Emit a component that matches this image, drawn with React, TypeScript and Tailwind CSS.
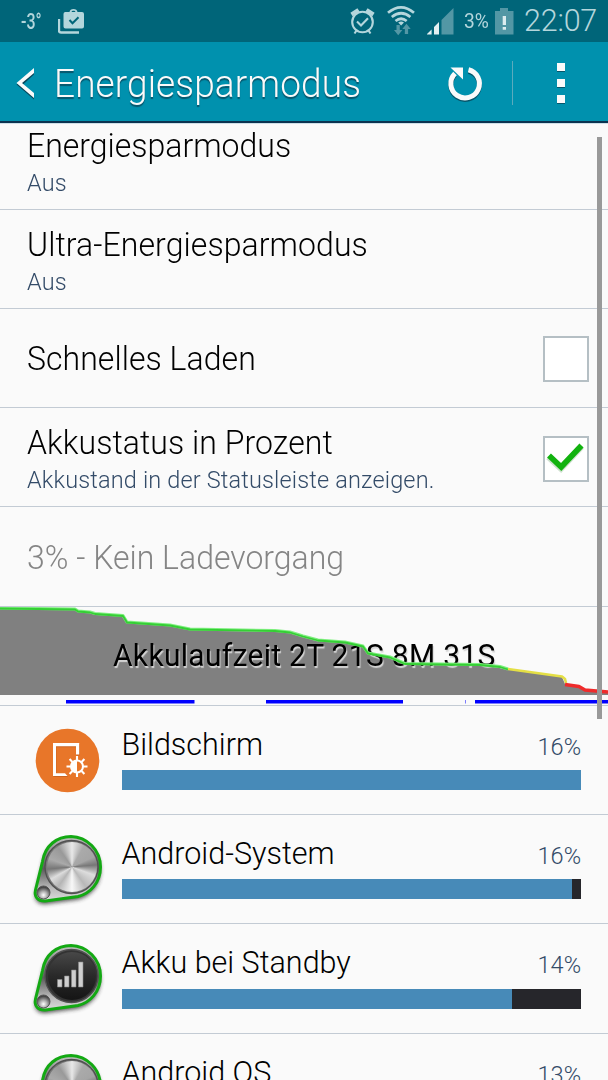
import React from "react";

const ICON = "#b4d6dc";
const DIM = "#5397a5";

function StatusBar() {
  return (
    <div className="flex h-[42px] items-center bg-[#006579] text-[#b4d6dc]">
      <span className="ml-[21px] w-[21px] text-[20px] leading-[42px] font-medium whitespace-nowrap">
        <span className="inline-block origin-left scale-x-[0.8] scale-y-[1.1]">-3°</span>
      </span>
      <svg className="ml-[16px]" width="28" height="26" viewBox="0 0 28 26">
        <path d="M1 11v11.5a2 2 0 0 0 2 2h18" fill="none" stroke={ICON} strokeWidth="2.4" />
        <path fillRule="evenodd" fill={ICON} d="M7 4h4.5c.3-2 1.800-3 4-3s3.700 1 4 3H24a2 2 0 0 1 2 2v12.500a2 2 0 0 1-2 2H7.500a2 2 0 0 1-2-2V6a2 2 0 0 1 1.500-2zM13.500 4h4c-.2-1-1-1.300-2-1.300s-1.800.3-2 1.300z" />
        <path d="M11.500 12l3 3.200 6-6" fill="none" stroke="#006579" strokeWidth="2" />
      </svg>
      <svg className="ml-auto" width="110" height="32" viewBox="348 5 110 32">
        <g fill="none" stroke={ICON} strokeWidth="2.100">
          <circle cx="362.500" cy="22" r="10.300" />
          <path d="M357 21.500l4 4 7-7.200M356.500 30.500l-2 3M368.500 30.500l2 3" />
          <path d="M351.500 14.500l7-4.600M373.500 14.500l-7-4.600" strokeWidth="4" />
        </g>
        <g fill="none" stroke={ICON} strokeWidth="2.700">
          <path d="M388 12.800q13-11 26 0" />
          <path d="M391.800 17q9.300-7.500 18.600 0" />
          <path d="M395.500 21q5.600-4.500 11.200 0" />
        </g>
        <path d="M398.200 22.500q2.900-2 5.800 0l-2.900 3z" fill={ICON} />
        <path d="M396.500 25h3.300v5h2.600l-4.200 5.300-4.200-5.300h2.500zM404.800 34h3.300v-5h2.600l-4.200-5.300-4.200 5.300h2.600z" fill={DIM} />
        <path d="M427 34.500v-.5l4.600-4.500v5zM434 34.500v-7.500l5-5v12.500z" fill="#e3f0f2" />
        <path d="M441.500 34.500V20L453.500 8v26.500z" fill={DIM} />
      </svg>
      <span className="ml-[6px] w-[26px] text-[20px] leading-[44px] whitespace-nowrap">
        <span className="inline-block origin-left scale-x-[0.96] scale-y-[1.04]">3%</span>
      </span>
      <svg className="ml-[5px]" width="19" height="28" viewBox="0 0 19 28">
        <path d="M0 4h5V1h8v3h5.500v23.500H0z" fill={DIM} />
        <path d="M7.700 9h3.300v9H7.700zM7.700 20h3.300v2.700H7.700z" fill="#dcecef" />
      </svg>
      <span className="mr-[10px] ml-[10px] w-[74px] text-[30.500px] leading-[42px] font-light tracking-[-0.200px] whitespace-nowrap">22:07</span>
    </div>
  );
}

function ActionBar() {
  return (
    <div className="flex h-[82px] items-start border-b border-[#cfe0e8] bg-[#0091ae]">
      <div className="flex h-[81px] w-full items-center border-b-2 border-[#0b3350] pt-[3px]">
        <svg className="ml-[15px]" width="22" height="36" viewBox="0 0 22 36">
          <path d="M19 4.500v5L8 19.500l11 10v5L1.500 19.500z" fill="#06485c" />
          <path d="M19 3v5L7 18l12 10v5L1.500 18z" fill="#fafafa" />
        </svg>
        <h1 className="mt-[3px] ml-[17px] w-[330px] origin-[0_32px] scale-y-[1.03] text-[37px] leading-[40px] font-light tracking-[0.100px] whitespace-nowrap text-[#fafafa] [text-shadow:0_2px_1px_#07556b]">Energiesparmodus</h1>
        <svg className="ml-[61.500px]" width="40" height="40" viewBox="0 0 40 40">
          <path d="M22.500 6.700A14.300 14.300 0 1 1 9 10.500" transform="translate(0 1.500)" fill="none" stroke="#06566b" strokeWidth="5" />
          <path d="M22.500 6.700A14.300 14.300 0 1 1 9 10.500" fill="none" stroke="#fafafa" strokeWidth="5" />
          <path d="M4.500 4.500h12.500v12z" fill="#fafafa" />
        </svg>
        <div className="ml-[26.500px] h-[44px] w-px bg-[#5cabbd]" />
        <div className="ml-[44px] flex flex-col gap-[8px]">
          <i className="block size-[8px] bg-[#fafafa] shadow-[0_1px_0_#06566b]" />
          <i className="block size-[8px] bg-[#fafafa] shadow-[0_1px_0_#06566b]" />
          <i className="block size-[8px] bg-[#fafafa] shadow-[0_1px_0_#06566b]" />
        </div>
      </div>
    </div>
  );
}

function Check({ on }: { on?: boolean }) {
  return (
    <div className={`mr-[19px] ml-auto flex size-[46px] items-center justify-center border-2 border-[#b5bfc4] bg-white ${on ? "mb-[2px]" : ""}`}>
      {on && (
        <svg width="42" height="42" viewBox="0 0 42 42">
          <path d="M4 18.500l13 12L38 8" fill="none" stroke="#0d6b0d" strokeOpacity=".2" strokeWidth="5" transform="translate(-1 1)" />
          <path d="M4 17.500l12.200 11.500L36.500 7.500" fill="none" stroke="#12b20f" strokeWidth="5.700" />
        </svg>
      )}
    </div>
  );
}

function Setting({ title, sub, check, className, titleClass, subClass = "mt-[2px]" }: { title: string; sub?: string; check?: "on" | "off"; className: string; titleClass: string; subClass?: string }) {
  return (
    <div className={`flex shrink-0 items-center border-b border-[#c3cbd4] pl-[27px] ${className}`}>
      <div className="whitespace-nowrap">
        <div className={`origin-[0_31px] scale-y-[1.04] text-[32px] leading-[40px] font-light ${titleClass}`}>{title}</div>
        {sub && <div className={`origin-[0_24px] scale-y-[1.03] text-[23.500px] leading-[32px] font-light tracking-[0.150px] text-[#334b68] ${subClass}`}>{sub}</div>}
      </div>
      {check && <Check on={check === "on"} />}
    </div>
  );
}

function Graph() {
  return (
    <div className="grid h-[99px] shrink-0 border-b border-[#c3cbd4]">
      <svg className="col-start-1 row-start-1" width="608" height="98" viewBox="0 607 608 98">
        <path d="M0 607L75 609 78 611 95 614 123 616 127 622 170 625 190 629 275 630.500 290 632 303 636 318 640 345 642 363 646 368 653 390 657 405 663 480 665 506 669 562 677 565 684 581 687 585 690 608 692V695H0Z" fill="#808080" />
      </svg>
      <div className="z-10 col-start-1 row-start-1 origin-[0_60px] scale-y-[1.02] pt-[29px] pl-[113px] text-[30px] leading-[40px] tracking-[0.300px] whitespace-nowrap text-black [text-shadow:1px_1.500px_1px_#d5d5d5]">Akkulaufzeit 2T 21S 8M 31S</div>
      <svg className="z-20 col-start-1 row-start-1" width="608" height="98" viewBox="0 607 608 98">
        <g fill="none" strokeLinejoin="round">
          <path d="M0 608L75 609 78 611 90 612 95 613.500 123 615.500 127 622 170 625 190 629 275 630.500 290 632 303 636 318 640 345 642 363 646 368 653 390 657 405 663.500 480 664.500 500 666.500 508 669" stroke="#80f080" strokeWidth="3" />
          <path d="M0 608.500L75 609.500 78 611.500 90 612.500 95 614 123 616 127 622.500 170 625.500 190 629.500 275 631 290 632.500 303 636.500 318 640.500 345 642.500 363 646.500 368 653.500 390 657.500 405 664 480 665 500 667 508 669.500" stroke="#35cf35" strokeWidth="1.800" />
          <path d="M508 669L562 676.500 565 679 566 683" stroke="#e4df45" strokeWidth="2.600" />
          <path d="M565 684.500L579 686.500 585 690 608 692" stroke="#ef2b2b" strokeWidth="3.400" />
        </g>
        <path d="M66 700h128.500v3.500H66zM266 700h137v3.500H266zM465 700h.5v3.500h-.5zM475 700h133v3.500H475z" fill="#0000ff" />
      </svg>
    </div>
  );
}

function ScreenIcon() {
  return (
    <svg width="80" height="84" viewBox="0 0 80 84">
      <circle cx="41.500" cy="40.500" r="31.800" fill="#e87629" />
      <path d="M41.500 56L39 53.200H30V26.200H50V34.500H53.200V23H27V56z" fill="#b95a1d" opacity=".6" transform="translate(.5 1)" />
      <path d="M41.500 56L39 53.200H30V26.200H50V34.500H53.200V23H27V56z" fill="#fff" />
      <g stroke="#fff" strokeWidth="2.100" fill="none">
        <circle cx="51" cy="46.500" r="6" />
        <path d="M51 36v4M51 53v4M40.500 46.500h4M57.500 46.500h4M43.600 39.100l2.800 2.800M55.600 51.100l2.800 2.800M43.600 53.900l2.800-2.800M55.600 41.900l2.800-2.800" />
      </g>
      <path d="M51 40.500a6 6 0 0 0 0 12z" fill="#fff" />
    </svg>
  );
}

function DialIcon({ signal }: { signal?: boolean }) {
  const shape = "M16.500 31.500C19 15.500 31 6.500 45 6.500C61 7 74.500 20 74.500 37C74.500 53 64 63.500 52 66.500L19.500 71C12 71.500 8 67 9.500 60Z";
  return (
    <div className="relative h-[84px] w-[84px]">
      <svg width="84" height="84" viewBox="0 0 84 84">
        <defs>
          <linearGradient id="rim" x1="0" y1="0" x2="0" y2="1">
            <stop offset="0" stopColor="#c2c2c2" />
            <stop offset=".25" stopColor="#8d8d8d" />
            <stop offset=".5" stopColor="#5b5b5b" />
            <stop offset=".8" stopColor="#bababa" />
            <stop offset="1" stopColor="#ddd" />
          </linearGradient>
          <radialGradient id="nub" cx=".5" cy=".7" r=".6">
            <stop offset="0" stopColor="#fff" />
            <stop offset=".5" stopColor="#aaa" />
            <stop offset="1" stopColor="#454545" />
          </radialGradient>
          <filter id="soft" x="-20%" y="-20%" width="140%" height="140%">
            <feGaussianBlur stdDeviation="2" />
          </filter>
        </defs>
        <path d={shape} transform="translate(0 3)" fill="#333" opacity=".85" filter="url(#soft)" />
        <path d={shape} fill="url(#rim)" stroke="#13a913" strokeWidth="3" />
        <circle cx="17.500" cy="62.500" r="6.500" fill="url(#nub)" stroke="#555" />
        <circle cx="45.500" cy="37" r="26.500" fill={signal ? "#333" : "#777"} stroke="#505050" strokeWidth="1.300" />
      </svg>
      <div className={signal
        ? "absolute top-[13px] left-[21.500px] size-[48px] rounded-full bg-linear-to-b from-[#484848] via-[#292929] to-[#151515]"
        : "absolute top-[12px] left-[20.500px] size-[50px] rounded-full bg-[conic-gradient(from_0deg,#e8e8e8,#aaa_30deg,#a5a5a5_65deg,#777_85deg,#ddd_110deg,#b8b8b8_145deg,#f8f8f8_180deg,#b5b5b5_215deg,#ddd_240deg,#777_265deg,#aaa_290deg,#999_325deg,#e8e8e8)]"} />
      {signal && (
        <svg className="absolute top-[22px] left-[31px]" width="28" height="27" viewBox="0 0 28 27">
          <path d="M.5 18.500h4.500v7.500H.5zM7.500 15h4.500v11H7.500zM14.500 9h4.500v17h-4.500zM21.500 1h4.500v25h-4.500z" fill="#cfcfcf" stroke="#888" strokeWidth=".6" />
        </svg>
      )}
    </div>
  );
}

function Usage({ name, pct, fill, icon, className, iconClass, barClass }: { name: string; pct: number; fill: number; icon: React.ReactNode; className: string; iconClass: string; barClass: string }) {
  return (
    <div className={`flex shrink-0 border-b border-[#c3cbd4] ${className}`}>
      <div className={`w-[121.500px] shrink-0 pl-[26px] ${iconClass}`}>{icon}</div>
      <div className="w-[459.500px] pt-[19px]">
        <div className="flex h-[40px] justify-between">
          <span className="origin-[0_30px] translate-y-[0.500px] scale-y-[1.03] text-[30.500px] leading-[40px] font-light">{name}</span>
          <span className="text-[23.500px] leading-[45px] font-light text-[#334b68]">{pct}%</span>
        </div>
        <div className={`h-[20px] bg-[#26262b] ${barClass}`}>
          <div className="h-full bg-[#478ab8]" style={{ width: `${fill}px` }} />
        </div>
      </div>
    </div>
  );
}

export default function App() {
  return (
    <div className="relative flex h-[1080px] w-[608px] flex-col overflow-hidden bg-[#fafafa] font-['Roboto',sans-serif] text-black">
      <StatusBar />
      <ActionBar />
      <div className="flex min-h-0 flex-1 flex-col overflow-hidden">
        <Setting title="Energiesparmodus" sub="Aus" className="h-[86px] pb-[8px]" titleClass="tracking-[0px]" subClass="mt-[1px]" />
        <Setting title="Ultra-Energiesparmodus" sub="Aus" className="h-[99px] pt-[5px]" titleClass="tracking-[0.080px]" subClass="mt-[1px]" />
        <Setting title="Schnelles Laden" check="off" className="h-[99px] pt-[2px]" titleClass="tracking-[0.050px]" />
        <Setting title="Akkustatus in Prozent" sub="Akkustand in der Statusleiste anzeigen." check="on" className="h-[99px] pt-[5px]" titleClass="tracking-[0.050px]" subClass="mt-[1px]" />
        <Setting title="3% - Kein Ladevorgang" className="h-[100px] pt-[3px]" titleClass="tracking-[0px] text-[#858585]" />
        <Graph />
        <Usage name="Bildschirm" pct={16} fill={459.5} icon={<ScreenIcon />} className="h-[109px]" iconClass="pt-[14px]" barClass="mt-[5px]" />
        <Usage name="Android-System" pct={16} fill={450.5} icon={<DialIcon />} className="h-[109px]" iconClass="pt-[15px]" barClass="mt-[5px]" />
        <Usage name="Akku bei Standby" pct={14} fill={390.5} icon={<DialIcon signal />} className="h-[110px]" iconClass="pt-[15px]" barClass="mt-[6px]" />
        <Usage name="Android OS" pct={13} fill={360} icon={<DialIcon />} className="h-[109px]" iconClass="pt-[15px]" barClass="mt-[5px]" />
      </div>
      <div className="absolute top-[137px] left-[597px] z-30 h-[582px] w-[5px] bg-[#999]" />
    </div>
  );
}
